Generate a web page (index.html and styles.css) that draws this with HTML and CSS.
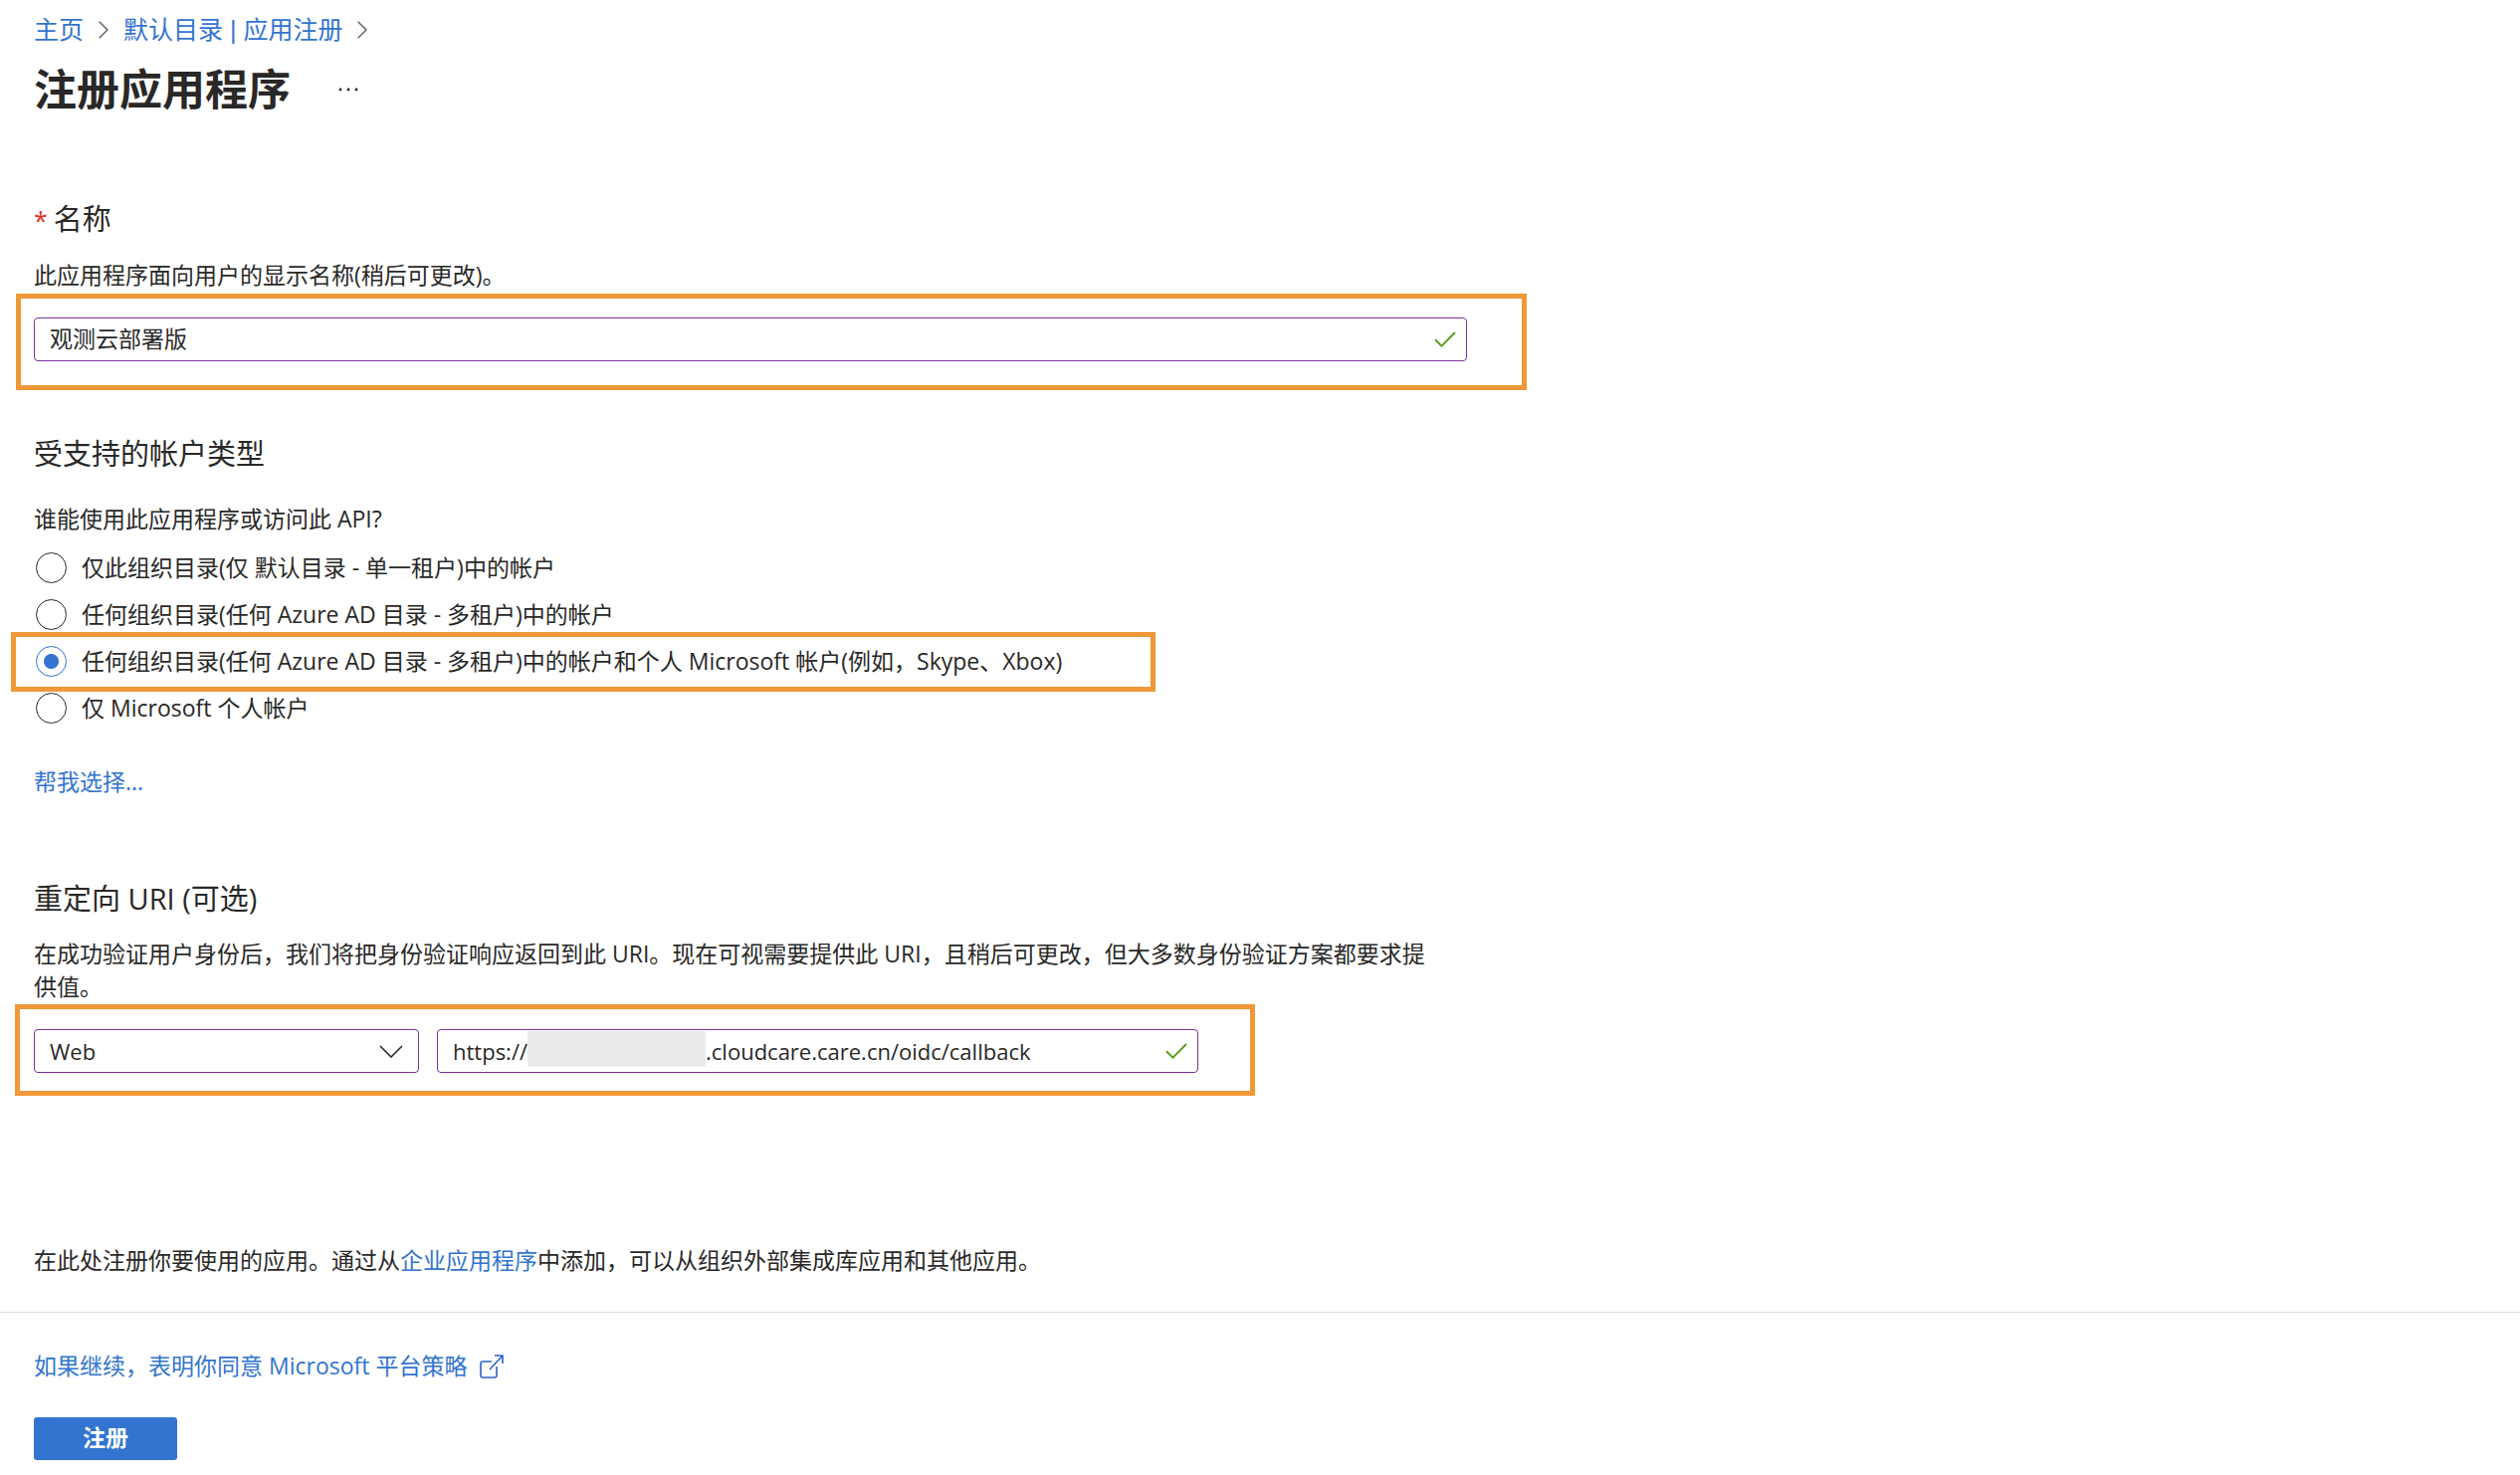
FILE: index.html
```html
<!DOCTYPE html>
<html lang="zh-CN">
<head>
<meta charset="utf-8">
<meta name="viewport" content="width=device-width, initial-scale=1">
<title>注册应用程序</title>
<link rel="stylesheet" href="styles.css">
</head>
<body>
<header class="page-header">
  <nav class="breadcrumb" aria-label="导航路径">
    <a href="#home">主页</a>
    <svg class="crumb-arrow" viewBox="0 0 10 18" aria-hidden="true"><path d="M0.7 0.7L9 9L0.7 17.3"/></svg>
    <a href="#registrations">默认目录 | 应用注册</a>
    <svg class="crumb-arrow" viewBox="0 0 10 18" aria-hidden="true"><path d="M0.7 0.7L9 9L0.7 17.3"/></svg>
  </nav>
  <div class="title-row">
    <h1 class="title">注册应用程序</h1>
    <button class="more" type="button" aria-label="更多">
      <svg viewBox="0 0 20 4" aria-hidden="true"><circle cx="2" cy="2" r="1.4"/><circle cx="10" cy="2" r="1.4"/><circle cx="18" cy="2" r="1.4"/></svg>
    </button>
  </div>
</header>

<form class="form">
  <main class="content">
    <section class="section">
      <h2 class="heading"><label for="app-name"><span class="required">*</span>名称</label></h2>
      <p class="text">此应用程序面向用户的显示名称(稍后可更改)。</p>
      <div class="field-row highlight highlight-name">
        <div class="field">
          <input class="field-input name-input" id="app-name" type="text" value="观测云部署版">
          <svg class="check" viewBox="0 0 22 16" aria-hidden="true"><path d="M1 8.2L7.5 14.6L21 1"/></svg>
        </div>
      </div>
    </section>

    <fieldset class="section accounts">
      <legend class="heading">受支持的帐户类型</legend>
      <p class="text question">谁能使用此应用程序或访问此 API?</p>
      <div class="options">
        <label class="option"><input type="radio" name="account">仅此组织目录(仅 默认目录 - 单一租户)中的帐户</label>
        <label class="option"><input type="radio" name="account">任何组织目录(任何 Azure AD 目录 - 多租户)中的帐户</label>
        <label class="option highlight highlight-option"><input type="radio" name="account" checked>任何组织目录(任何 Azure AD 目录 - 多租户)中的帐户和个人 Microsoft 帐户(例如，Skype、Xbox)</label>
        <label class="option"><input type="radio" name="account">仅 Microsoft 个人帐户</label>
      </div>
      <a class="help" href="#help">帮我选择...</a>
    </fieldset>

    <section class="section redirect">
      <h2 class="heading">重定向 URI (可选)</h2>
      <p class="text description">在成功验证用户身份后，我们将把身份验证响应返回到此 URI。现在可视需要提供此 URI，且稍后可更改，但大多数身份验证方案都要求提供值。</p>
      <div class="field-row highlight highlight-uri">
        <div class="field platform">
          <select class="field-input" aria-label="平台">
            <option>Web</option>
          </select>
          <svg class="caret" viewBox="0 0 24 13" aria-hidden="true"><path d="M1 1L12 12L23 1"/></svg>
        </div>
        <div class="field uri">
          <label for="uri">https://</label>
          <span class="mask"></span>
          <input class="field-input" id="uri" type="text" value=".cloudcare.care.cn/oidc/callback">
          <svg class="check" viewBox="0 0 22 16" aria-hidden="true"><path d="M1 8.2L7.5 14.6L21 1"/></svg>
        </div>
      </div>
    </section>

    <p class="text note">在此处注册你要使用的应用。通过从<a href="#enterprise">企业应用程序</a>中添加，可以从组织外部集成库应用和其他应用。</p>
  </main>

  <footer class="footer">
    <a class="policy" href="#policy">如果继续，表明你同意 Microsoft 平台策略
      <svg class="external" viewBox="0 0 24 24" aria-hidden="true"><path d="M12 7H3Q1 7 1 9V21Q1 23 3 23H15Q17 23 17 21V12M10 15L23 1M15 1H23V9"/></svg>
    </a>
    <button class="submit" type="button">注册</button>
  </footer>
</form>
</body>
</html>
```
FILE: styles.css
```css
* {
  box-sizing: border-box;
}

body {
  margin: 0;
  background: #fff;
  color: #292827;
  font-family: "Open Sans", "Noto Sans CJK SC", sans-serif;
  font-size: 23px;
  line-height: 33px;
}

h1,
h2,
p {
  margin: 0;
}

a {
  color: #3274cf;
  text-decoration: none;
}

svg {
  display: block;
  flex: none;
  fill: none;
  stroke: currentColor;
}

.page-header {
  padding: 11px 34px 0;
}

.breadcrumb {
  display: flex;
  align-items: center;
  gap: 15px;
  font-family: "Liberation Sans", "Noto Sans CJK SC", sans-serif;
  font-size: 25px;
  line-height: 38px;
}

.crumb-arrow {
  width: 10px;
  height: 18px;
  color: #605e5c;
  stroke-width: 1.4;
}

.title-row {
  display: flex;
  align-items: center;
  gap: 48px;
  margin-top: 13px;
}

.title {
  font-size: 43px;
  font-weight: 700;
  line-height: 56px;
}

.more {
  padding: 0;
  border: 0;
  background: none;
  color: inherit;
}

.more svg {
  width: 20px;
  height: 4px;
  fill: currentColor;
  stroke: none;
}

.content {
  max-width: 1508px;
  padding: 82px 34px 35px;
}

.heading {
  padding: 0;
  font-size: 29px;
  font-weight: 400;
  line-height: 40px;
}

.required {
  margin-right: 6px;
  color: #e8301c;
  font-size: 25px;
}

.text {
  margin-top: 19px;
}

.description {
  padding-right: 30px;
}

.field-row {
  display: flex;
  gap: 18px;
  margin-top: 26px;
}

.field {
  display: flex;
  align-items: center;
  flex: 1;
  height: 44px;
  padding: 0 10px 0 15px;
  border: 1px solid #7d30a0;
  border-radius: 4px;
}

.field-input {
  flex: 1;
  min-width: 0;
  height: 40px;
  padding: 0;
  border: 0;
  outline: 0;
  background: none;
  color: inherit;
  font: inherit;
  appearance: none;
}

.name-input {
  padding-bottom: 4px;
}

.check {
  width: 22px;
  height: 16px;
  color: #5c9e20;
  stroke-width: 2;
}

/* Orange callout frames drawn over the form */
.highlight {
  position: relative;
}

.highlight::after {
  content: "";
  position: absolute;
  border: 5px solid #f09838;
  pointer-events: none;
}

.highlight-name::after {
  inset: -24px -60px -29px -18px;
}

.highlight-option::after {
  inset: -6px -94px -7px -23px;
}

.highlight-uri::after {
  inset: -25px -57px -23px -19px;
}

.accounts {
  min-width: 0;
  margin: 73px 0 0;
  padding: 0;
  border: 0;
}

.question {
  margin-top: 29px;
}

.options {
  display: flex;
  flex-direction: column;
  align-items: flex-start;
  margin-top: 9px;
}

.option {
  display: flex;
  align-items: center;
  gap: 15px;
  height: 47px;
  padding-left: 2px;
}

.option input {
  flex: none;
  width: 31px;
  height: 31px;
  margin: 0;
  border: 1px solid #292827;
  border-radius: 50%;
  appearance: none;
}

.option input:checked {
  border-color: #3274cf;
  background: radial-gradient(circle, #3274cf 7px, transparent 8px);
}

.help {
  display: block;
  width: fit-content;
  margin-top: 34px;
}

.redirect {
  margin-top: 81px;
}

.highlight-uri {
  max-width: 1170px;
  font-size: 22px;
}

.platform {
  flex: 0 0 387px;
  padding-right: 15px;
}

.caret {
  width: 24px;
  height: 13px;
  stroke-width: 1.6;
}

.mask {
  align-self: flex-start;
  width: 179px;
  height: 36px;
  margin-top: 1px;
  background: #ebebeb;
}

.note {
  margin-top: 172px;
}

.footer {
  display: flex;
  flex-direction: column;
  align-items: flex-start;
  gap: 35px;
  padding: 37px 34px 16px;
  border-top: 1px solid #dcdcdc;
}

.policy {
  display: flex;
  align-items: center;
  gap: 13px;
}

.external {
  width: 24px;
  height: 24px;
  color: #2d60d0;
  stroke-width: 1.6;
}

.submit {
  width: 144px;
  height: 43px;
  padding: 0 0 3px;
  border: 0;
  border-radius: 3px;
  background: #3274cf;
  color: #fff;
  font: inherit;
  font-weight: 700;
}
```
